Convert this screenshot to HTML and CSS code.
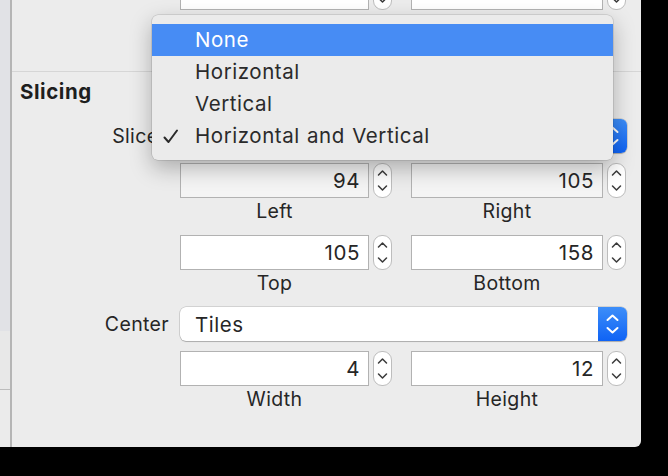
FILE: index.html
```html
<!DOCTYPE html>
<html lang="en">
<head>
<meta charset="utf-8">
<title>Slicing inspector</title>
<link rel="stylesheet" href="styles.css">
</head>
<body>
<div class="window">
  <aside class="sidebar">
    <div class="sb-top"></div>
    <div class="sb-mid"></div>
    <div class="sb-bottom"></div>
  </aside>
  <main class="inspector">
    <section class="sec sec-top">
      <div class="grid-row pair-row cut">
        <div class="pair">
          <div class="field">0</div>
          <div class="stepper"><svg viewBox="0 0 19 35" width="19" height="35"><path d="M5.5 12 L9.5 8 L13.5 12 M5.5 23 L9.5 27 L13.5 23"/></svg></div>
          <div class="field f2">0</div>
          <div class="stepper"><svg viewBox="0 0 19 35" width="19" height="35"><path d="M5.5 12 L9.5 8 L13.5 12 M5.5 23 L9.5 27 L13.5 23"/></svg></div>
        </div>
      </div>
    </section>

    <section class="sec slicing">
      <h2 class="sec-title">Slicing</h2>

      <div class="grid-row popup-row first">
        <span class="row-label">Slices</span>
        <div class="popup">
          <span class="popup-text">Horizontal and Vertical</span>
          <span class="popup-arrows"><svg viewBox="0 0 29 34" width="29" height="34"><path d="M9.5 13 L14.5 8.5 L19.5 13 M9.5 21 L14.5 25.5 L19.5 21"/></svg></span>
        </div>
      </div>

      <div class="grid-row pair-row">
        <div class="pair">
          <div class="field shaded">94</div>
          <div class="stepper"><svg viewBox="0 0 19 35" width="19" height="35"><path d="M5.5 12 L9.5 8 L13.5 12 M5.5 23 L9.5 27 L13.5 23"/></svg></div>
          <div class="field f2 shaded">105</div>
          <div class="stepper"><svg viewBox="0 0 19 35" width="19" height="35"><path d="M5.5 12 L9.5 8 L13.5 12 M5.5 23 L9.5 27 L13.5 23"/></svg></div>
          <div class="cap">Left</div>
          <div class="cap c2">Right</div>
        </div>
      </div>

      <div class="grid-row pair-row">
        <div class="pair">
          <div class="field">105</div>
          <div class="stepper"><svg viewBox="0 0 19 35" width="19" height="35"><path d="M5.5 12 L9.5 8 L13.5 12 M5.5 23 L9.5 27 L13.5 23"/></svg></div>
          <div class="field f2">158</div>
          <div class="stepper"><svg viewBox="0 0 19 35" width="19" height="35"><path d="M5.5 12 L9.5 8 L13.5 12 M5.5 23 L9.5 27 L13.5 23"/></svg></div>
          <div class="cap">Top</div>
          <div class="cap c2">Bottom</div>
        </div>
      </div>

      <div class="grid-row popup-row">
        <span class="row-label">Center</span>
        <div class="popup">
          <span class="popup-text">Tiles</span>
          <span class="popup-arrows"><svg viewBox="0 0 29 34" width="29" height="34"><path d="M9.5 13 L14.5 8.5 L19.5 13 M9.5 21 L14.5 25.5 L19.5 21"/></svg></span>
        </div>
      </div>

      <div class="grid-row pair-row">
        <div class="pair">
          <div class="field">4</div>
          <div class="stepper"><svg viewBox="0 0 19 35" width="19" height="35"><path d="M5.5 12 L9.5 8 L13.5 12 M5.5 23 L9.5 27 L13.5 23"/></svg></div>
          <div class="field f2">12</div>
          <div class="stepper"><svg viewBox="0 0 19 35" width="19" height="35"><path d="M5.5 12 L9.5 8 L13.5 12 M5.5 23 L9.5 27 L13.5 23"/></svg></div>
          <div class="cap">Width</div>
          <div class="cap c2">Height</div>
        </div>
      </div>
    </section>
  </main>

  <ul class="menu">
    <li class="item selected">None</li>
    <li class="item">Horizontal</li>
    <li class="item">Vertical</li>
    <li class="item checked"><svg class="check" viewBox="0 0 16 16" width="16" height="16"><path d="M1.5 8.5 L5.5 13 L14 1.5"/></svg>Horizontal and Vertical</li>
  </ul>
</div>
</body>
</html>
```

FILE: styles.css
```css
* { box-sizing: border-box; }

html, body {
  margin: 0;
  padding: 0;
  background: #000;
  width: 668px;
  height: 476px;
  overflow: hidden;
}

body {
  font-family: "Inter", "Liberation Sans", sans-serif;
  font-size: 20.5px;
  letter-spacing: 0.55px;
  word-spacing: 1px;
  color: #262626;
}

.window {
  position: relative;
  width: 641px;
  height: 447px;
  display: flex;
  background: #ececec;
  border-bottom-right-radius: 6px;
  overflow: hidden;
}

/* sidebar strip */
.sidebar {
  width: 12px;
  display: flex;
  flex-direction: column;
  border-right: 2px solid #b5b5b5;
}
.sb-top { height: 331px; background: #e1e2e6; }
.sb-mid { height: 59px; background: #e8e8e8; border-bottom: 1px solid #bcbcbc; }
.sb-bottom { flex: 1; background: #ebebeb; }

.inspector {
  flex: 1;
  display: flex;
  flex-direction: column;
}

.sec-top {
  height: 72px;
  border-bottom: 1px solid #d6d6d6;
}

.grid-row {
  display: grid;
  grid-template-columns: 157px 447px;
  column-gap: 11px;
  align-items: center;
}

.cut { margin-top: -25px; }

.pair-row .pair { grid-column: 2; }

.pair {
  display: grid;
  grid-template-columns: 189px 19px 207px 19px;
  grid-template-rows: 35px 26px;
  column-gap: 4px;
}
.pair .f2 { margin-left: 15px; width: 192px; }

.field {
  height: 35px;
  background: #fff;
  border: 1px solid #b2b2b2;
  text-align: right;
  padding-right: 8px;
  line-height: 34px;
  color: #262626;
}
.field.shaded { background: #f4f4f4; }

.stepper {
  height: 35px;
  width: 19px;
  border: 1px solid #bdbdbd;
  border-radius: 9px;
  background: #fff;
  display: flex;
}
.stepper svg { display: block; margin: -1px; }
.stepper path {
  fill: none;
  stroke: #3a3a3a;
  stroke-width: 1.5;
  stroke-linecap: round;
  stroke-linejoin: round;
}

.cap {
  grid-column: 1;
  grid-row: 2;
  text-align: center;
  line-height: 26px;
  font-size: 19.5px;
  letter-spacing: 0.35px;
  color: #262626;
}
.cap.c2 { grid-column: 3; padding-left: 15px; }

.slicing { padding-top: 8px; }

.sec-title {
  margin: 0 0 0 8px;
  font-size: 20.5px;
  font-weight: 700;
  line-height: 24px;
  color: #1e1e1e;
}

.popup-row { margin-top: 11px; margin-bottom: 10px; }
.popup-row.first { margin-top: 15px; }

.pair-row { margin-bottom: 11px; }
.slicing .pair-row:last-child { margin-bottom: 0; }

.row-label {
  text-align: right;
  font-size: 19.5px;
  letter-spacing: 0.35px;
  line-height: 24px;
  color: #262626;
}

.popup {
  height: 34px;
  display: flex;
  align-items: center;
  background: #fff;
  border-radius: 6px;
  box-shadow: 0 0 0 0.5px rgba(0,0,0,0.22), 0 1px 1px rgba(0,0,0,0.18);
  overflow: hidden;
}
.popup-text {
  flex: 1;
  padding-left: 15px;
}
.popup-arrows {
  width: 29px;
  height: 34px;
  background: linear-gradient(#3d8ef9, #0f63f5);
}
.popup-arrows svg { display: block; }
.popup-arrows path {
  fill: none;
  stroke: #fff;
  stroke-width: 2;
  stroke-linecap: round;
  stroke-linejoin: round;
}

/* dropdown menu overlay */
.menu {
  position: absolute;
  left: 152px;
  top: 15px;
  width: 461px;
  height: 145px;
  margin: 0;
  padding: 9px 0 8px;
  list-style: none;
  background: #ebebeb;
  border-radius: 6px;
  box-shadow: 0 0 0 0.5px rgba(0,0,0,0.18), 0 8px 22px rgba(0,0,0,0.28);
}
.item {
  position: relative;
  height: 32px;
  line-height: 32px;
  padding-left: 43px;
  color: #2a2a2a;
}
.item.selected {
  background: #478cf4;
  color: #fff;
}
.check {
  position: absolute;
  left: 11px;
  top: 9px;
}
.check path {
  fill: none;
  stroke: #2a2a2a;
  stroke-width: 2;
  stroke-linecap: round;
  stroke-linejoin: round;
}
```
